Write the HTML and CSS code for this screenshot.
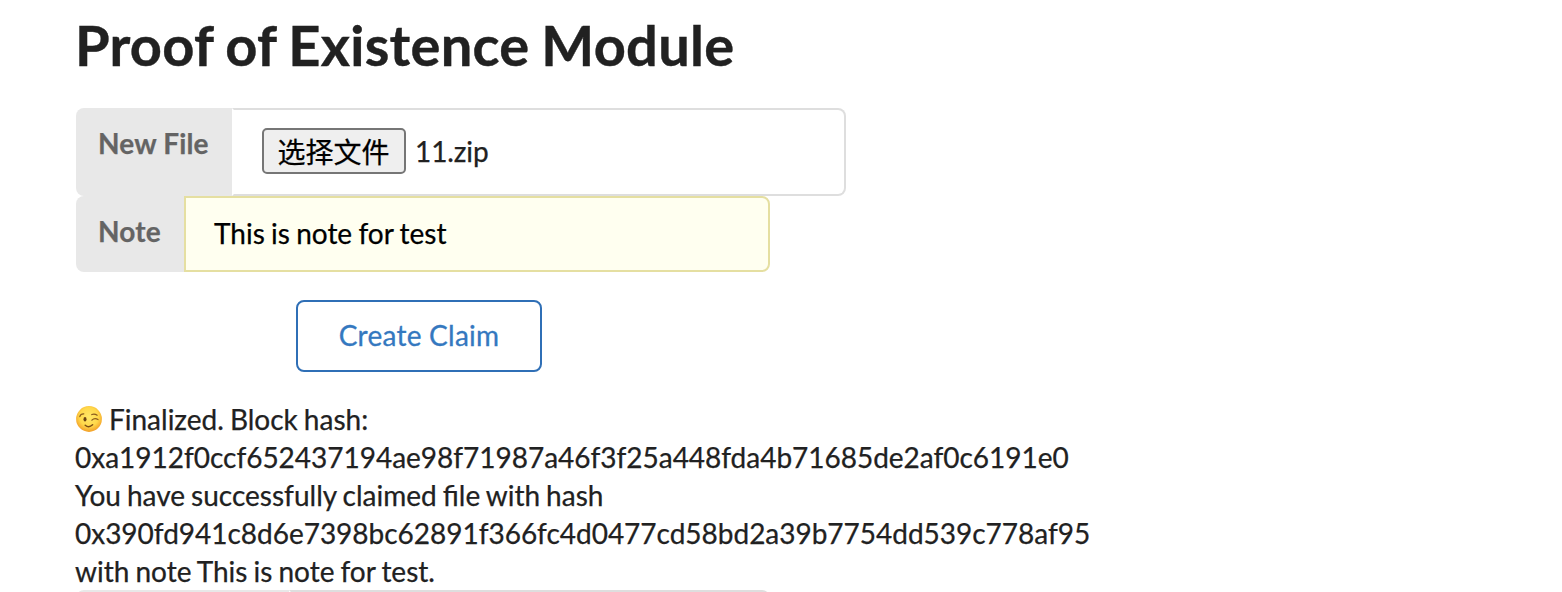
FILE: index.html
```
<!DOCTYPE html>
<html lang="en">
<head>
<meta charset="utf-8">
<title>Proof of Existence Module</title>
<link rel="stylesheet" href="styles.css">
</head>
<body>
<main class="module">
  <h1 class="title">Proof of Existence Module</h1>
  <form class="form">
    <div class="field field-file">
      <label class="label">New File</label>
      <div class="control">
        <button type="button" class="picker">选择文件</button>
        <span class="filename">11.zip</span>
      </div>
    </div>
    <div class="field field-note">
      <label class="label">Note</label>
      <div class="control autofilled"><span class="note">This is note for test</span></div>
    </div>
    <button type="button" class="claim"><span>Create Claim</span></button>
  </form>
  <div class="status">
    <div class="line"><svg class="wink" viewBox="0 0 26 26" aria-hidden="true">
      <defs>
        <radialGradient id="face" cx="50%" cy="42%" r="56%">
          <stop offset="0" stop-color="#ffe768"/>
          <stop offset="0.65" stop-color="#ffd84a"/>
          <stop offset="1" stop-color="#f3a32b"/>
        </radialGradient>
      </defs>
      <circle cx="13" cy="13" r="12.9" fill="url(#face)"/>
      <ellipse cx="9" cy="13.2" rx="1.5" ry="2.2" fill="#6b4212"/>
      <path d="M3.8 10.6Q4.6 7.6 7.8 7.8M15.8 8.6Q18.3 7.2 21.2 9.2M15.9 14.2Q18.6 11.4 22 13.6" fill="none" stroke="#8a5a1c" stroke-width="1.2" stroke-linecap="round"/>
      <path d="M9.2 19.2Q12.8 22.4 16.6 18.8" fill="none" stroke="#7d4e14" stroke-width="1.5" stroke-linecap="round"/>
    </svg><span class="text">Finalized. Block hash:</span></div>
    <div class="line"><span class="hash">0xa1912f0ccf652437194ae98f71987a46f3f25a448fda4b71685de2af0c6191e0</span></div>
    <div class="line"><span class="text">You have successfully claimed file with hash</span></div>
    <div class="line"><span class="hash">0x390fd941c8d6e7398bc62891f366fc4d0477cd58bd2a39b7754dd539c778af95</span></div>
    <div class="line"><span class="text">with note This is note for test.</span></div>
  </div>
  <div class="field field-next">
    <div class="label"></div>
    <div class="control"></div>
  </div>
</main>
</body>
</html>
```
FILE: styles.css
```
* { box-sizing: border-box; }
html, body { margin: 0; height: 592px; overflow: hidden; }
body {
  background: #fff;
  color: #212121;
  font: 28px/38px Lato, "Noto Sans CJK SC", sans-serif;
  -webkit-text-stroke: 0.25px currentColor;
}
.module { height: 592px; overflow: hidden; padding: 9px 0 0 76px; }
.title {
  margin: 0 0 27px -1px;
  font-size: 56px;
  line-height: 72px;
  font-weight: 700;
  letter-spacing: 0.28px;
  word-spacing: -2px;
  -webkit-text-stroke-width: 0.4px;
}
.form { display: flex; flex-direction: column; align-items: flex-start; }
.field { display: flex; }
.field-file { width: 770px; height: 88px; }
.field-note { width: 694px; height: 76px; }
.label {
  flex: none;
  padding: 16px 0 0 22px;
  background: #e8e8e8;
  border-radius: 8px 0 0 8px;
  color: #646464;
  font-weight: 700;
  letter-spacing: 0.15px;
}
.field-file .label { width: 156px; }
.field-note .label { width: 108px; }
.control {
  flex: 1;
  display: flex;
  align-items: center;
  padding-left: 28px;
  border: 2px solid #dedede;
  border-left-color: transparent;
  border-radius: 0 8px 8px 0;
}
.autofilled {
  padding: 0 0 2px 28px;
  border-color: #e5dfa1;
  background: #fffff0;
  color: #000;
}
.note { word-spacing: -0.9px; }
.picker {
  width: 144px;
  height: 46px;
  margin: 0 9px 2px 0;
  padding: 0 1px 1px 0;
  border: 2px solid #767676;
  border-radius: 5px;
  background: #efefef;
  color: #000;
  font: 28px/38px "Noto Sans CJK SC", sans-serif;
}
.filename { padding-bottom: 2px; letter-spacing: -0.1px; }
.claim {
  width: 246px;
  height: 72px;
  margin: 28px 0 0 220px;
  padding: 0 0 2px;
  border: 2px solid #2f6fb6;
  border-radius: 8px;
  background: #fff;
  color: #3478bf;
  font: 28px/36px Lato, sans-serif;
  letter-spacing: 0.25px;
  -webkit-text-stroke: 0.3px currentColor;
}
.status { margin: 28px 0 0 -1px; }
.line { display: flex; align-items: center; height: 38px; white-space: nowrap; }
.text { word-spacing: -1.1px; }
.hash { letter-spacing: -0.02px; }
.wink { width: 26px; height: 26px; margin: 0 7px 0 1px; }
.field-next { width: 694px; height: 76px; }
.field-next .label { width: 213px; }
.field-note .autofilled { border-left-color: #e5dfa1; }
```
